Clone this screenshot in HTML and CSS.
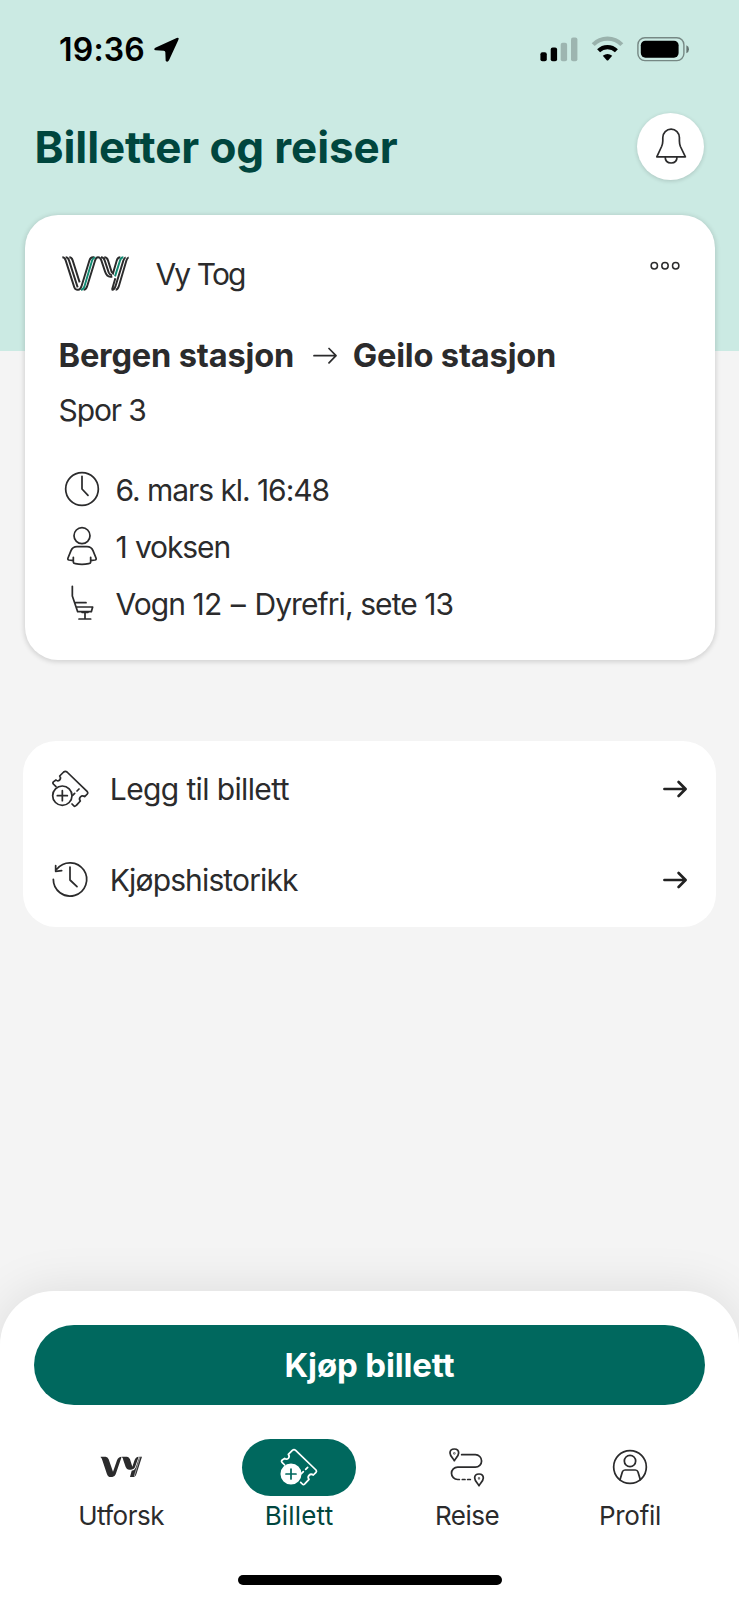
FILE: index.html
```html
<!DOCTYPE html>
<html lang="no">
<head>
<meta charset="utf-8">
<title>Billetter og reiser</title>
<link rel="stylesheet" href="styles.css">
</head>
<body>
<div class="status">
  <span class="time">19:36</span>
  <svg class="location" viewBox="458 108 81 81"><path d="M465 143 L529 114 Q538 111 534 120 L506 181 Q501 189 496 182 L495 157 Q495 152 490 152 L466 151 Q458 148 465 143Z" fill="#000"/></svg>
  <svg class="signal" width="38" height="26" viewBox="0 0 38 26"><g fill="#000"><rect x=".4" y="16.2" width="6.4" height="9" rx="2"/><rect x="10.7" y="11.6" width="6.4" height="13.6" rx="2"/><g opacity=".22"><rect x="20.7" y="6.8" width="6.4" height="18.4" rx="2"/><rect x="31" y="1.6" width="6.4" height="23.6" rx="2"/></g></g></svg>
  <svg width="33" height="26" viewBox="0 0 33 26"><g fill="none" stroke="#000" stroke-width="4.2"><path d="M2.2 8.6A20 20 0 0 1 30.8 8.6" opacity=".24"/><path d="M7.6 14.8A12.6 12.6 0 0 1 25.4 14.8"/></g><path d="M11.8 19.8Q16.5 16 21.2 19.8L17.3 24.2Q16.5 25 15.7 24.2Z"/></svg>
  <svg width="53" height="26" viewBox="0 0 53 26"><rect x=".9" y="1.8" width="46" height="22.8" rx="7" fill="none" stroke="#000" stroke-opacity=".42" stroke-width="1.4"/><rect x="3.8" y="4.7" width="37.8" height="17" rx="4.6"/><path d="M49.4 9.2q2.6 1.2 2.6 4t-2.6 4z" opacity=".5"/></svg>
</div>
<header class="bar">
  <h1>Billetter og reiser</h1>
  <button class="bell"><svg class="line" width="40" height="40" viewBox="0 0 40 40"><path d="M5.8 30.8L10.6 20.5Q11.8 17.6 11.8 15V11.6A8.2 8.4 0 0 1 28.4 11.6V15Q28.4 17.6 29.4 20.5L34.4 30.8Z M14.2 31Q14.2 37 20.1 37Q26 37 26 31"/></svg></button>
</header>
<section class="ticket">
  <div class="operator">
    <svg width="67" height="35" viewBox="37 32 201 105"><g fill="none" stroke="#2b2b2c" stroke-width="5.8">
      <path d="M38 36Q45 36 48 45L74 126Q76 133 82 133H86Q92 133 95 124L119 46Q122 36 130 36H134"/>
      <path d="M48 36Q55 36 58 45L84 126M59 36Q66 36 69 45L90 111"/>
      <path d="M102 133Q109 133 112 124L136 46Q139 36 145 36Q152 36 155 45L166 78Q171 94 182 94H188"/>
      <path d="M154 36Q162 36 165 45L177 81Q180 89 187 90M164 36Q172 36 175 45L186 80L190 84L201 46Q204 36 212 36"/>
      <path d="M228 36Q224 37 221 46L197 124Q194 133 188 133H186M237 36Q233 37 230 46L207 124Q204 133 198 133M197 99L187 133"/></g>
      <g fill="none" stroke="#128a72" stroke-width="5.8"><path d="M94 133Q101 133 104 124L127 46Q130 37 137 36M196 93L211 46Q214 36 221 36"/></g></svg>
    <span class="name">Vy Tog</span>
    <svg class="more" width="32" height="10" viewBox="0 0 32 10"><g fill="none" stroke="#2b2b2c" stroke-width="1.5"><circle cx="5.3" cy="4.7" r="3.2"/><circle cx="16" cy="4.7" r="3.2"/><circle cx="26.7" cy="4.7" r="3.2"/></g></svg>
  </div>
  <div class="route"><b>Bergen stasjon</b><svg class="line" width="24" height="20" viewBox="0 0 24 20"><path d="M1 10.7H23M16 3.5L23 10.7L16 17.9"/></svg><b>Geilo stasjon</b></div>
  <div class="track">Spor 3</div>
  <div class="fact"><svg class="icon" viewBox="179 51 132 132"><circle cx="245" cy="117" r="49"/><path d="M245 79V117L263 136"/></svg><span class="date">6. mars kl. 16:48</span></div>
  <div class="fact"><svg class="icon" viewBox="179 222 132 132"><circle cx="245" cy="257" r="24"/><path d="M219 322V337Q219 340 225 341Q245 345 265 341Q271 340 271 337V322M219 332L206 330Q201 329 203 324L212 302Q217 290 230 290H260Q273 290 278 302L287 324Q289 329 284 330L271 332"/></svg><span class="who">1 voksen</span></div>
  <div class="fact"><svg class="icon" viewBox="179 393 132 132"><path d="M216 409V438L232 485H273L277 471H228M226 458H257M254 487V507M236 507H271M245 487H263"/></svg><span class="seat">Vogn 12 <span class="dash">–</span> Dyrefri, sete 13</span></div>
</section>
<nav class="menu">
  <a><svg class="icon" viewBox="-5 6 132 132"><path d="M19 65L11 57Q8 53 12 50L19 45Q24 50 30 45Q35 39 30 33L42 21Q47 17 52 21L113 80Q116 84 113 87L105 95Q98 90 92 96Q87 102 92 108L80 121Q76 126 72 122L67 117M69 91L75 85M82 78L88 72"/><circle cx="38" cy="92" r="29"/><path d="M38 77V107M23 92H53"/></svg><span class="add">Legg til billett</span><svg class="go" width="24" height="18" viewBox="0 0 24 18"><path d="M1.4 9H22.4M15.6 2L22.6 9L15.6 16"/></svg></a>
  <a><svg class="icon" viewBox="145 384 132 132"><path d="M161 448A50 50 0 1 0 172 417M168 407V424L186 422M211 411V450L232 470"/></svg><span class="hist">Kjøpshistorikk</span><svg class="go" width="24" height="18" viewBox="0 0 24 18"><path d="M1.4 9H22.4M15.6 2L22.6 9L15.6 16"/></svg></a>
</nav>
<footer class="sheet">
  <button class="buy">Kjøp billett</button>
  <nav class="tabs">
    <a><i><svg width="42" height="22" viewBox="301 558 126 66"><path fill="#2b2b2c" d="M303 560H318Q324 560 327 568L340 605L352 571Q356 560 366 560L348 613Q345 621 338 621H329Q325 621 322 613L308 571Q306 563 303 562ZM367 560H382Q388 560 391 568L398 590L404 572Q408 560 417 560L407 589Q404 599 394 599H388Q381 599 378 591L371 571Q370 563 367 562ZM419 560H427L410 613Q408 621 402 621H391L396 602Q405 601 408 593Z"/><path d="M421 561L404 618" stroke="#fff" stroke-width="1.6"/></svg></i><span class="t1">Utforsk</span></a>
    <a class="active"><i><svg class="icon" viewBox="-4 5 132 132"><path d="M19 65L11 57Q8 53 12 50L19 45Q24 50 30 45Q35 39 30 33L42 21Q47 17 52 21L113 80Q116 84 113 87L105 95Q98 90 92 96Q87 102 92 108L80 121Q76 126 72 122L67 117M69 91L75 85M82 78L88 72"/><circle cx="38" cy="92" r="29" fill="#fff"/><path d="M38 77V107M23 92H53" stroke="#00685e"/></svg></i><span class="t2">Billett</span></a>
    <a><i><svg class="icon" viewBox="15 15 132 132"><g id="pin"><path d="M43 27C34 27 30 32 30 39C30 47 38 54 43 62C48 54 56 47 56 39C56 32 52 27 43 27Z"/><circle cx="43" cy="40" r="1"/></g><use href="#pin" x="74" y="75"/><path d="M65 44H106A18.7 18.7 0 0 1 106 81.5H53A18.5 18.5 0 0 0 53 118.5H58M67 118.5H75M83 118.5H91"/></svg></i><span class="t3">Reise</span></a>
    <a><i><svg class="icon" viewBox="717 525 132 132"><circle cx="783" cy="591" r="49"/><circle cx="783" cy="573" r="17"/><path d="M753 629L760 606Q762 600 768 600H799Q805 600 807 606L814 629"/></svg></i><span class="t4">Profil</span></a>
  </nav>
  <div class="home"></div>
</footer>
</body>
</html>
```
FILE: styles.css
```css
* { box-sizing: border-box; }
body {
  margin: 0;
  height: 1600px;
  display: flex;
  flex-direction: column;
  overflow: hidden;
  background: linear-gradient(#cbeae3 351px, #f4f4f4 351px);
  color: #2b2b2c;
  font: 400 30px/40px Inter, "Liberation Sans", sans-serif;
}
svg { display: block; flex: none; }
span, b, h1 { white-space: nowrap; }
button { border: 0; padding: 0; font: inherit; }
.line, .icon { fill: none; stroke: #2b2b2c; stroke-linecap: round; stroke-linejoin: round; stroke-width: 1.7; }
.icon { width: 44px; height: 44px; stroke-width: 5.2; }

.status { height: 98px; display: flex; align-items: center; gap: 13px; padding: 0 49px 0 59px; color: #000; }
.time { padding-top: 2px; font-size: 32px; font-weight: 600; letter-spacing: .2px; }
.location { width: 27px; height: 27px; margin-left: -5px; }
.signal { margin-left: auto; }

.bar { height: 96px; display: flex; align-items: center; justify-content: space-between; padding: 0 35px 0 34.5px; }
h1 { margin: 0; padding-top: 1px; font-size: 44px; font-weight: 700; letter-spacing: -.1px; color: #00463e; }
.bell { width: 67px; height: 67px; border-radius: 50%; background: #fff; display: flex; align-items: center; justify-content: center; box-shadow: 0 1px 4px rgba(0,0,0,.16); }

.ticket { margin: 21px 24px 0 24.5px; height: 445px; padding: 34px 34px 0 35px; border-radius: 33px; background: #fff; box-shadow: 0 1px 5px 1px rgba(0,0,0,.14); }
.operator { height: 48px; display: flex; align-items: center; padding-left: 2.5px; }
.name { margin: 1px 0 0 26.5px; letter-spacing: -1.9px; word-spacing: 1px; }
.more { margin: 12px 0 0 auto; align-self: flex-start; }
.route { height: 40px; margin-top: 38px; display: flex; align-items: center; font-size: 32.6px; letter-spacing: -.17px; margin-left: -1px; }
.route svg { margin: 0 16px 0 18.5px; }
.track { margin: 14px 0 31.5px -1px; padding-top: 1px; height: 40px; letter-spacing: -1.1px; }
.fact { height: 57px; display: flex; align-items: center; gap: 12px; }
.fact > span { padding-top: 1px; }
.date { letter-spacing: -1.06px; }
.who { letter-spacing: -1.1px; word-spacing: 1px; }
.seat { letter-spacing: -.92px; }
.dash { margin: 0 2px; }

.menu { margin: 81px 23px 0; padding: 2.5px 29.5px 1.5px 25.3px; height: 186px; border-radius: 33px; background: #fff; }
.menu a { height: 91px; display: flex; align-items: center; gap: 17.5px; }
.add { letter-spacing: -.62px; }
.hist { letter-spacing: -.86px; }
.go { margin-left: auto; fill: none; stroke: #222; stroke-width: 2.6; stroke-linecap: round; stroke-linejoin: round; }

.sheet { margin-top: auto; height: 309px; padding: 34px 34px 0; border-radius: 54px 54px 0 0; background: #fff; box-shadow: 0 0 50px rgba(0,0,0,.1); }
.buy { display: block; width: 100%; height: 79.5px; border-radius: 40px; background: #00685e; color: #fff; font-size: 33px; font-weight: 700; letter-spacing: -.16px; }
.tabs { display: grid; grid-template-columns: 178px 178px 158px 168px; margin: 34px 0 0 -2px; font-size: 26px; line-height: 32px; }
.tabs a { display: flex; flex-direction: column; align-items: center; gap: 4px; }
.tabs i { width: 114px; height: 57px; border-radius: 29px; display: flex; align-items: center; justify-content: center; }
.active { color: #00463e; }
.active i { background: #00685e; }
.active .icon { stroke: #fff; }
.t1 { letter-spacing: -.53px; }
.t2 { letter-spacing: .18px; }
.t3 { letter-spacing: -.51px; }
.t4 { letter-spacing: -.29px; }
.home { width: 264px; height: 9.5px; margin: 43.5px auto 0; border-radius: 5px; background: #000; }
```
